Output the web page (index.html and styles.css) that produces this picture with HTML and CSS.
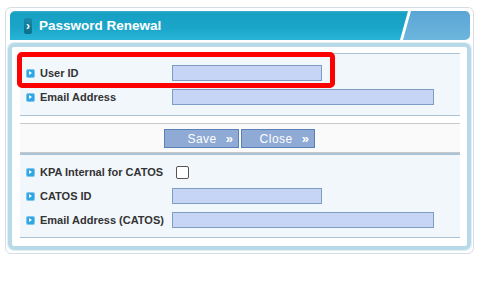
FILE: index.html
```html
<!DOCTYPE html>
<html lang="en">
<head>
    <meta charset="UTF-8"/>
    <title>Password Renewal</title>
    <link rel="stylesheet" href="styles.css">
</head>
<body>
<div class="frame">
    <div class="pop-header">
        <div class="pop-title">
            <span class="title-icon">&#8250;</span>
            <h5>Password Renewal</h5>
        </div>
        <div class="pop-tab"></div>
    </div>

    <div class="pop-body">
        <div class="inner">
            <div class="form-sec sec-top">
                <div class="form-row">
                    <label class="form-label" for="userId"><i class="bullet"></i>User ID</label>
                    <input type="text" id="userId" class="txt short"/>
                </div>
                <div class="form-row">
                    <label class="form-label" for="email"><i class="bullet"></i>Email Address</label>
                    <input type="text" id="email" class="txt long"/>
                </div>
            </div>

            <div class="btn-row">
                <a href="javascript:void(0);" class="btn btn-save">Save <b>&raquo;</b></a>
                <a href="javascript:void(0);" class="btn btn-close">Close <b>&raquo;</b></a>
            </div>

            <div class="form-sec sec-bottom">
                <div class="form-row">
                    <label class="form-label" for="kpa"><i class="bullet"></i>KPA Internal for CATOS</label>
                    <input type="checkbox" id="kpa" class="chk"/>
                </div>
                <div class="form-row">
                    <label class="form-label" for="catosId"><i class="bullet"></i>CATOS ID</label>
                    <input type="text" id="catosId" class="txt short"/>
                </div>
                <div class="form-row">
                    <label class="form-label" for="catosEmail"><i class="bullet"></i>Email Address (CATOS)</label>
                    <input type="text" id="catosEmail" class="txt long"/>
                </div>
            </div>
        </div>
    </div>

    <!--강조 표시-->
    <div class="highlight"></div>
</div>
</body>
</html>
```

FILE: styles.css
```css
* {
    margin: 0;
    padding: 0;
    box-sizing: border-box;
}

body {
    background-color: #fff;
    font-family: "Liberation Sans", Arial, sans-serif;
    color: #333;
}

a {
    text-decoration: none;
}

.frame {
    position: relative;
    width: 469px;
    height: 247px;
    margin: 7px 0 0 5px;
    padding: 3px 2px 0 2px;
    border: 1px solid #d3dee7;
    border-radius: 6px;
}

/* 제목 */
.pop-header {
    display: flex;
    height: 29px;
    margin-left: 2px;
}

.pop-title {
    display: flex;
    align-items: center;
    width: 398px;
    padding-left: 14px;
    border-radius: 5px 0 0 0;
    background: linear-gradient(#3aaecb 0, #17a0c3 8%, #1aa5c8 55%, #27b4d6 100%);
    clip-path: polygon(0 0, 100% 0, calc(100% - 8px) 100%, 0 100%);
}

.title-icon {
    display: flex;
    align-items: center;
    justify-content: center;
    width: 8px;
    height: 16px;
    margin-top: 1px;
    border-radius: 2px;
    background: linear-gradient(#1a8aa8, #0c6f8c);
    color: #fff;
    font-size: 12px;
    font-weight: bold;
    line-height: 16px;
}

.pop-title h5 {
    margin-left: 7px;
    color: #fff;
    font-size: 13.5px;
    font-weight: bold;
}

.pop-tab {
    width: 67px;
    margin-left: -5px;
    border-radius: 0 5px 5px 0;
    background: linear-gradient(#5aa5d5, #6db6de);
    clip-path: polygon(8px 0, 100% 0, 100% 100%, 0 100%);
}

/* 본문 */
.pop-body {
    width: 463px;
    height: 207px;
    margin-top: 3px;
    padding: 6px 7px 7px 8px;
    border: 4px solid #b8dae8;
    border-radius: 6px;
    box-shadow: 0 0 0 1px #e2eff5;
}

.form-sec {
    background-color: #f2f7fc;
    border-top: 1px solid #a9c4d8;
    border-bottom: 1px solid #a9c4d8;
}

.sec-top {
    padding: 7px 0 6px 0;
}

.sec-bottom {
    padding: 5px 0 5px 0;
    border-top: 2px solid #a9c4d8;
}

.form-row {
    display: flex;
    align-items: center;
    height: 24px;
}

.form-label {
    display: flex;
    align-items: center;
    width: 152px;
    padding-left: 7px;
    font-size: 11px;
    font-weight: bold;
    color: #333;
    white-space: nowrap;
}

.bullet {
    position: relative;
    flex: none;
    width: 7px;
    height: 7px;
    margin-right: 6px;
    border-radius: 1px;
    background-color: #2ea6e6;
    box-shadow: 0 0 0 1px #7cc6ee;
}

.bullet:after {
    content: "";
    position: absolute;
    left: 2px;
    top: 1px;
    border-left: 3px solid #fff;
    border-top: 2.5px solid transparent;
    border-bottom: 2.5px solid transparent;
}

.txt {
    height: 16px;
    border: 1px solid #7f9dc4;
    background-color: #c6d5f5;
    outline: none;
}

.txt.short {
    width: 150px;
}

.txt.long {
    width: 262px;
}

.chk {
    appearance: none;
    width: 13px;
    height: 13px;
    margin-left: 4px;
    border: 1px solid #555;
    border-radius: 2px;
    background-color: #fff;
}

/* 버튼 */
.btn-row {
    display: flex;
    justify-content: center;
    gap: 2px;
    height: 30px;
    margin-top: 7px;
    padding-top: 5px;
    padding-right: 1px;
    border-top: 1px solid #c8c8c8;
    border-bottom: 1px solid #c8c8c8;
    background-color: #fafafa;
}

.btn {
    display: flex;
    align-items: center;
    justify-content: flex-end;
    gap: 9px;
    height: 19px;
    padding-right: 5px;
    border: 1px solid #5a80b8;
    background-color: #8eaad5;
    color: #fff;
    font-size: 12px;
    letter-spacing: 0.5px;
}

.btn b {
    font-size: 13px;
    letter-spacing: 0;
}

.btn-save {
    width: 75px;
}

.btn-close {
    width: 74px;
}

.highlight {
    position: absolute;
    left: 11px;
    top: 44px;
    width: 318px;
    height: 36px;
    border: 5px solid #f00;
    border-radius: 5px;
}
```
